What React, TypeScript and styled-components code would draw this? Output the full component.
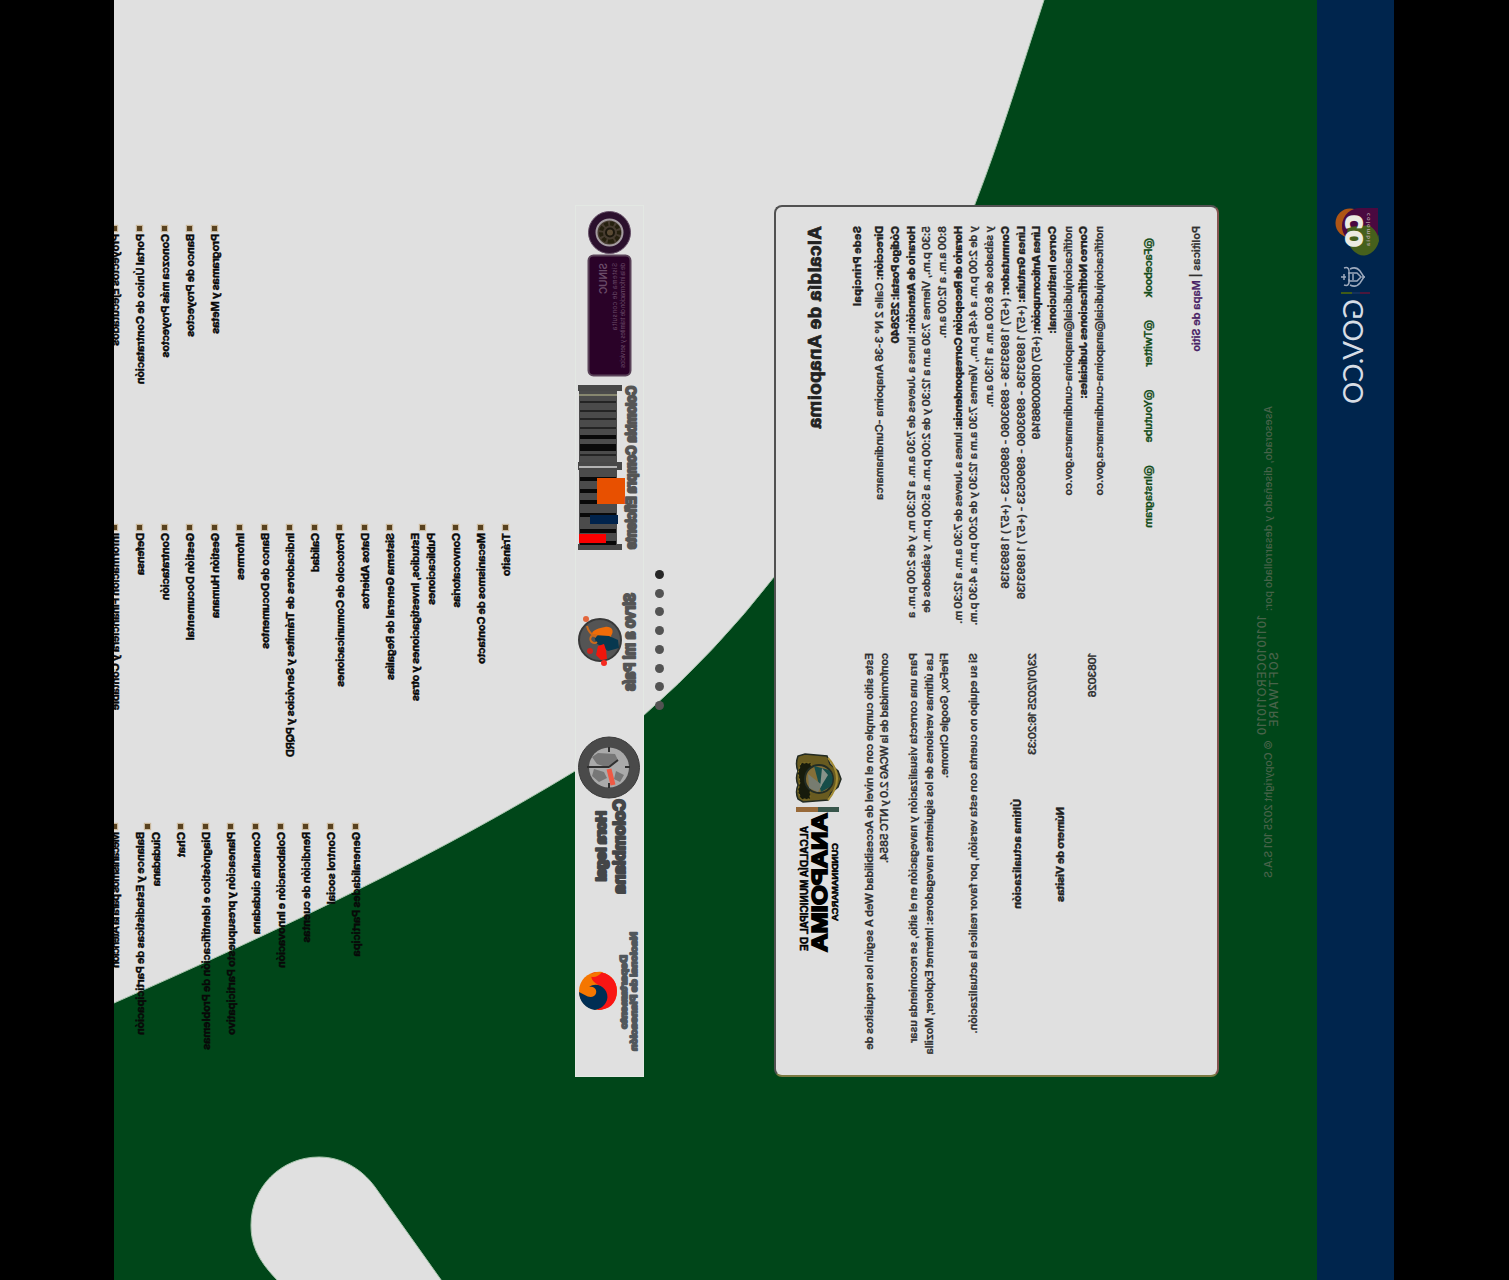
import React, { useCallback } from "react";
import styled, { createGlobalStyle } from "styled-components";

const Global = createGlobalStyle`
  body { margin: 0; background: #000; }
  * { box-sizing: border-box; }
`;

const LIGHT = "#e0e0e0";
const GREEN = "#004619";
const NAVY = "#00254d";

const Viewport = styled.div`
  width: 1509px;
  height: 1280px;
  overflow: hidden;
  background: #000;
`;

/* The whole page is transposed along its diagonal. */
const Page = styled.div`
  width: 1280px;
  height: 1509px;
  padding-top: 114px;
  transform: matrix(0, 1, 1, 0, 0, 0);
  transform-origin: 0 0;
  font-family: Inter, "Liberation Sans", sans-serif;
`;

const Main = styled.main`
  position: relative;
  height: 1203px;
  overflow: hidden;
  background: ${GREEN};
`;

const Backdrop = styled.svg`
  position: absolute;
  inset: 0;
`;

const Flow = styled.div`
  position: relative;
  display: flex;
  flex-direction: column;
  height: 100%;
`;

const Lists = styled.section`
  display: grid;
  grid-template-columns: 299px 299px 400px;
  align-items: start;
  height: 473px;
  margin-top: -12px;
  padding-left: 226px;
`;

const List = styled.ul`
  list-style: none;
  margin: 0;
  padding: 0;
`;

const Item = styled.li`
  display: grid;
  grid-template-columns: 5px 1fr;
  align-items: center;
  column-gap: 3px;
  padding: 4.5px 0;
  font-size: 11px;
  line-height: 16px;
  font-weight: 700;
  color: #080808;
  -webkit-text-stroke: 0.4px #080808;
`;

const Bullet = styled.i`
  width: 5px;
  height: 5px;
  background: #59421f;
  box-shadow: 0 0 1px 1px #c9b79b;
`;

const Line = styled.span`
  display: block;
  width: max-content;
  white-space: pre;
`;

function Fit({ w, children }: { w: number; children: React.ReactNode }) {
  const fit = useCallback(
    (el: HTMLSpanElement | null) => {
      if (!el) return;
      el.style.letterSpacing = "0px";
      const n = (el.textContent || "x").length;
      el.style.letterSpacing = `${(w - el.offsetWidth) / n}px`;
    },
    [w]
  );
  return <Line ref={fit}>{children}</Line>;
}

type Row = [string, number][];
const LISTS: Row[][] = [
  [
    [["Proyectos Ejecutados", 112]],
    [["Portal Único de Contratación", 150]],
    [["Conozca más Proyectos", 123]],
    [["Banco de Proyectos", 103]],
    [["Programas y Metas", 100]],
  ],
  [
    [["Información Financiera y Contable", 177]],
    [["Defensa", 42]],
    [["Contratación", 67]],
    [["Gestión Documental", 107]],
    [["Gestión Humana", 85]],
    [["Informes", 47]],
    [["Banco de Documentos", 116]],
    [["Indicadores de Trámites y Servicios y PQRD", 224]],
    [["Calidad", 39]],
    [["Protocolo de Comunicaciones", 154]],
    [["Datos Abiertos", 76]],
    [["Sistema General de Regalías", 147]],
    [["Estudios, Investigaciones y otras", 168], ["Publicaciones", 72]],
    [["Convocatorias", 74]],
    [["Mecanismos de Contacto", 131]],
    [["Tránsito", 43]],
  ],
  [
    [["Mecanismos para la Atención", 135]],
    [["Balance y Estadísticas de Participación", 203], ["Ciudadana", 54]],
    [["Chat", 25]],
    [["Diagnóstico e Identificación de Problemas", 218]],
    [["Planeación y presupuesto Participativo", 203]],
    [["Consulta ciudadana", 102]],
    [["Colaboración e Innovación", 136]],
    [["Rendición de cuentas", 111]],
    [["Control social", 72]],
    [["Generalidades Participa", 124]],
  ],
];

const Strip = styled.section`
  width: 872px;
  height: 69px;
  margin-left: 205px;
  background: ${LIGHT};
  box-shadow: inset 0 0 0 1px #e3e8e3;
`;

const StripArt = styled.svg`
  display: block;
  font-family: Inter, "Liberation Sans", sans-serif;
`;

const Dots = styled.div`
  display: flex;
  justify-content: center;
  gap: 9.75px;
  height: 9px;
  margin-top: 11px;
`;

const Dot = styled.i<{ $on?: boolean }>`
  width: 9px;
  height: 9px;
  border-radius: 50%;
  background: ${(p) => (p.$on ? "#262626" : "#535353")};
`;

const Card = styled.section`
  display: grid;
  grid-template-columns: 427px 1fr;
  width: 872px;
  height: 446px;
  margin: 110px 0 0 205px;
  padding-left: 19px;
  border: 2px solid #515151;
  border-right-color: #7c7a42;
  border-bottom-color: #855450;
  border-radius: 8px;
  background: ${LIGHT};
  color: #303030;
  font-size: 11px;
  line-height: 15.7px;
  font-weight: 600;
  -webkit-text-stroke: 0.25px;
`;

const Column = styled.div`
  display: flex;
  flex-direction: column;
`;

const Heading = styled.h2`
  margin: 27px 0 23px;
  font-family: "Liberation Sans", sans-serif;
  font-size: 19px;
  line-height: 24px;
  font-weight: 700;
  color: #222;
  -webkit-text-stroke: 0.8px #222;
`;

const Strong = styled.strong`
  font-weight: 800;
  color: #222;
`;

const Place = styled.div`
  margin-bottom: 7px;
`;

const Social = styled.nav`
  display: flex;
  margin-top: 33px;
  padding-left: 12px;
  gap: 23px;
  color: #134b18;
`;

const Policies = styled.div`
  margin-top: 33px;
`;

const Purple = styled.span`
  color: #482064;
`;

const Brand = styled.svg`
  display: block;
  margin: 18px 0 0 100px;
  font-family: "Liberation Sans", sans-serif;
`;

const Block = styled.div<{ $top: number; $left?: number }>`
  margin: ${(p) => p.$top}px 0 0 ${(p) => p.$left || 0}px;
`;

const Credits = styled.footer`
  display: flex;
  align-items: center;
  gap: 4px;
  height: 98px;
  padding-left: 406px;
  color: #48634a;
  font-size: 10.5px;
  font-weight: 500;
`;

const Studio = styled.div`
  width: 121px;
  font-size: 12px;
  line-height: 12px;
  font-weight: 500;
`;

const StudioSub = styled.div`
  padding-left: 37px;
`;

const GovBar = styled.header`
  height: 77px;
  background: ${NAVY};
`;

const GovArt = styled.svg`
  display: block;
  font-family: Lato, sans-serif;
`;

function Bars() {
  const dark = [435, 444, 477, 489, 500, 513, 529, 541];
  return (
    <g>
      <rect x="385" y="4" width="165" height="38" fill="#4b4b4b" />
      <path d="M385 3h6v44h-6zM462 3h8v44h-8zM544 3h6v44h-6z" fill="#484848" />
      {[401, 410, 418, 427, 454].map((x) => (
        <rect key={x} x={x} y="5" width="2" height="36" fill="#242424" />
      ))}
      {dark.map((x) => (
        <rect key={x} x={x} y="5" width={x === 444 ? 7 : 4} height="36" fill="#090909" />
      ))}
      <rect x="394" y="4" width="2" height="38" fill="#87876f" />
      <rect x="466" y="4" width="2" height="38" fill="#b2b2b2" />
      <rect x="478" y="22" width="26" height="28" fill="#e85000" />
      <rect x="515" y="15" width="9" height="28" fill="#00234c" />
      <rect x="534" y="4" width="9" height="27" fill="#fb0000" />
    </g>
  );
}

function Logos() {
  return (
    <StripArt width="872" height="69" viewBox="205 0 872 69">
      <circle cx="232.500" cy="34.500" r="21" fill="#2b102d" stroke="#665068" strokeWidth="1" />
      <circle cx="232.500" cy="34.500" r="13" fill="#473c30" stroke="#a39ba0" strokeWidth="2" />
      <circle cx="232.500" cy="35" r="9" fill="none" stroke="#25200e" strokeWidth="4" strokeDasharray="4 2" />
      <circle cx="232.500" cy="35" r="4" fill="#5a4a33" stroke="#1c180d" strokeWidth="2" />
      <rect x="255.500" y="13.500" width="120" height="42" rx="5" fill="#2a0228" stroke="#5a4359" strokeWidth="2" />
      <g fill="#6a4c69">
        <text x="263" y="32" fontSize="10" fontWeight="600" textLength="31">SINUC</text>
        <text x="263" y="42" fontSize="6" textLength="67">Sistema de consulta</text>
        <text x="263" y="50" fontSize="6" textLength="105">de la información de trámites y servicios</text>
      </g>
      <Bars />
      <g fill="#555" stroke="#555" strokeWidth="2.200" strokeLinejoin="round">
        <text x="386" y="61" fontSize="13" fontWeight="600" textLength="163" lengthAdjust="spacingAndGlyphs">
          Colombia Compra Eficiente
        </text>
        <text x="593" y="60" fontSize="15" fontWeight="600" textLength="98" lengthAdjust="spacingAndGlyphs">
          Sirvo a mi País
        </text>
      </g>
      <circle cx="640" cy="25" r="21" fill="#545454" stroke="#383838" strokeWidth="2" />
      <path d="M627 30c2-10 4-14 9-13l2 12 10 6-3 4-9-3c-6 4-10 0-9-6z" fill="#ef6c08" />
      <path d="M635 19l8 2 8 12-3 11-8-1-4-9z" fill="#07384f" />
      <path d="M636 22a4 4 0 1 1 6 0M626 12c5 1 9 5 11 9" fill="none" stroke="#ce6919" strokeWidth="2" />
      <path d="M646 23l9-2 5 5-1 6-9-1-6-2z" fill="#f2160c" />
      <circle cx="651" cy="15" r="3" fill="#cc241c" />
      <circle cx="619" cy="11" r="3" fill="#e3663c" />
      <circle cx="663" cy="29" r="3" fill="#f52a20" />
      <circle cx="767.500" cy="34" r="30.500" fill="#4a4a4a" stroke="#3b3b3b" strokeWidth="1" />
      <circle cx="767.500" cy="34" r="20" fill="#aaa" />
      <path
        d="M753 23l4-6 7 5 4 12-8 9-6-3zM769 19l7-2 6 7-4 8-6-3zM771 41l8-2 3 6-7 4z"
        fill="#777"
      />
      <path d="M767 34V12M767 34l-7 9M747 34h5M783 34h5M767 50v5" stroke="#303030" strokeWidth="2" />
      <path d="M769 34l16 4" stroke="#ee5944" strokeWidth="5" />
      <g fill="#444648" stroke="#444648" strokeWidth="2.200" strokeLinejoin="round" fontWeight="700">
        <text x="811" y="31" fontSize="13" textLength="70" lengthAdjust="spacingAndGlyphs">
          Hora legal
        </text>
        <text x="799" y="50" fontSize="16" textLength="95" lengthAdjust="spacingAndGlyphs">
          Colombiana
        </text>
      </g>
      <circle cx="991" cy="23" r="19" fill="#f57600" />
      <path d="M972 22a19 19 0 0 0 8 16c10 8 27 2 30-14q-6-6-12-4c-8 12-20 10-26 2z" fill="#f57600" />
      <path d="M973 17c-3 14 5 25 18 25s19-9 19-19l-11-3c-1 9-8 12-12 7-3-6-7-13-14-10z" fill="#f91514" />
      <path d="M1010 20c-1-9-9-16-18-16 2 5 7 10 4 15-4 5-11 1-9-5-7 9 3 21 13 18 6-2 9-7 10-12z" fill="#002e54" />
      <path d="M976 13c-3 4-5 9-4 14 5-4 6-8 4-14z" fill="#f57600" />
      <g fill="#51575c" stroke="#51575c" strokeWidth="1.800" strokeLinejoin="round" fontWeight="600">
        <text x="955" y="52" fontSize="9" textLength="74" lengthAdjust="spacingAndGlyphs">
          Departamento
        </text>
        <text x="932" y="62" fontSize="9" textLength="119" lengthAdjust="spacingAndGlyphs">
          Nacional de Planeación
        </text>
      </g>
    </StripArt>
  );
}

function CityBrand() {
  return (
    <Brand width="202" height="50" viewBox="753 795 202 50">
      <path d="M756 799q8-3 15 0 7-3 14 0 7-3 14 0l3 5-2 25-7 3-6 7-8 3-8-3-7-8-8-3-2-22z" fill="#695b20" stroke="#222a22" strokeWidth="1.500" />
      <path d="M763 802l10-3 9 2 9-2 8 3v9l-36 1z" fill="#171b0c" strokeDasharray="2 2" stroke="#857325" />
      <path d="M758 829q20 18 42 0" fill="none" stroke="#a28b35" strokeWidth="2" />
      <circle cx="779" cy="820" r="14" fill="#856f38" stroke="#232d25" strokeWidth="2" />
      <path d="M766 815l26 7-5 9q-9 6-17-1z" fill="#174d49" />
      <path d="M774 809l14 1 4 9-7 4z" fill="#777c70" />
      <path d="M768 823l20-2-13 8z" fill="#87928a" />
      <rect x="807" y="797" width="5" height="22" fill="#986938" />
      <rect x="807" y="819" width="5" height="21" fill="#38564b" />
      <g fill="#000">
        <text x="826" y="809" fontSize="10" textLength="125" lengthAdjust="spacingAndGlyphs" stroke="#000" strokeWidth=".5">
          ALCALDÍA MUNICIPAL DE
        </text>
        <text x="813" y="828" fontSize="22.500" fontWeight="700" textLength="139" lengthAdjust="spacingAndGlyphs" stroke="#000" strokeWidth="1.800">
          ANAPOIMA
        </text>
        <text x="843" y="838.500" fontSize="9" textLength="78" lengthAdjust="spacingAndGlyphs" stroke="#000" strokeWidth=".5">
          CUNDINAMARCA
        </text>
      </g>
    </Brand>
  );
}

const EMAIL = "notificacionjudicial@anapoima-cundinamarca.gov.co";

export default function App() {
  return (
    <Viewport>
      <Global />
      <Page>
        <Main>
          <Backdrop width="1280" height="1203" viewBox="0 114 1280 1203">
            <path
              d="M-5 100V1046L0 1044C70 1021 140 1000 204 975C350 920 475 858 577 774Q652 716 716 643Q748 610 771 575C855 437 930 280 1003 114L1010 100Z"
              fill={LIGHT}
              stroke="#a9c6ae"
            />
            <path
              d="M1284 444L1187 375C1168 361 1157 341 1157 319C1157 281 1187 251 1225 251C1247 251 1262 259 1284 281Z"
              fill={LIGHT}
              stroke="#a9c6ae"
            />
          </Backdrop>
          <Flow>
            <Lists>
              {LISTS.map((rows, i) => (
                <List key={i}>
                  {rows.map((row) => (
                    <Item key={row[0][0]}>
                      <Bullet />
                      <div>
                        {row.map(([t, w]) => (
                          <Fit key={t} w={w}>{t}</Fit>
                        ))}
                      </div>
                    </Item>
                  ))}
                </List>
              ))}
            </Lists>
            <Strip>
              <Logos />
            </Strip>
            <Dots>
              {[0, 1, 2, 3, 4, 5, 6, 7].map((i) => (
                <Dot key={i} $on={i === 0} />
              ))}
            </Dots>
            <Card>
              <Column>
                <Heading><Fit w={203}>Alcaldía de Anapoima</Fit></Heading>
                <Place><Fit w={80}><Strong>Sede Principal</Strong></Fit></Place>
                <Fit w={274}><Strong>Dirección:</Strong> Calle 2 N° 3-36 Anapoima -Cundinamarca</Fit>
                <Fit w={117}><Strong>Código Postal: 252640</Strong></Fit>
                <Fit w={392}><Strong>Horario de Atención:</Strong> lunes a Jueves de 7:30 a.m. a 12:30 m. y de 2:00 p.m. a</Fit>
                <Fit w={386}>5:30 p.m., Viernes 7:30 a.m a 12:30 y de 2:00 p.m. a 5:00 p.m. y sábados de</Fit>
                <Fit w={112}>8:00 a.m. a 12:00 a.m.</Fit>
                <Fit w={398}><Strong>Horario de Recepción Correspondencia:</Strong> lunes a Jueves de 7:30 a.m. a 12:30 m.</Fit>
                <Fit w={399}>y de 2:00 p.m. a 4:45 p.m., Viernes 7:30 a.m a 12:30 y de 2:00 p.m. a 4:30 p.m.</Fit>
                <Fit w={181}>y sábados de 8:00 a.m. a 11:30 a.m.</Fit>
                <Fit w={362}><Strong>Conmutador:</Strong> (+57) 1 8993136 - 8993060 - 8990533 - (+57 ) 1 8993136</Fit>
                <Fit w={373}><Strong>Línea Gratuita:</Strong> (+57) 1 8993136 - 8993060 - 8990533 - (+57 ) 1 8993136</Fit>
                <Fit w={213}><Strong>Línea Anticorrupción:</Strong> (+57) 018000968149</Fit>
                <Fit w={108}><Strong>Correo Institucional:</Strong></Fit>
                <Fit w={269}>{EMAIL}</Fit>
                <Fit w={173}><Strong>Correo Notificaciones Judiciales:</Strong></Fit>
                <Fit w={269}>{EMAIL}</Fit>
                <Social>
                  <Fit w={59}>@Facebook</Fit>
                  <Fit w={47}>@Twitter</Fit>
                  <Fit w={53}>@Youtube</Fit>
                  <Fit w={62}>@Instagram</Fit>
                </Social>
                <Policies>
                  <Fit w={126}>Políticas | <Purple>Mapa de Sitio</Purple></Fit>
                </Policies>
              </Column>
              <Column>
                <CityBrand />
                <Block $top={18}>
                  <Fit w={397}>Este sitio cumple con el nivel de Accesibilidad Web A según los requisitos de</Fit>
                  <Fit w={210}>conformidad de la WCAG 2.0 y NTC 5854.</Fit>
                </Block>
                <Block $top={13}>
                  <Fit w={390}>Para una correcta visualización y navegación en el sitio, se recomienda usar</Fit>
                  <Fit w={401}>Las últimas versiones de los siguientes navegadores: Internet Explorer, Mozilla</Fit>
                  <Fit w={125}>FireFox, Google Chrome.</Fit>
                </Block>
                <Block $top={13}>
                  <Fit w={381}>Si su equipo no cuenta con esta versión, por favor realice la actualización.</Fit>
                </Block>
                <Block $top={28} $left={146}>
                  <Fit w={110}><Strong>Última actualización</Strong></Fit>
                </Block>
                <Fit w={102}>23/01/2025 16:20:33</Fit>
                <Block $top={12} $left={154}>
                  <Fit w={95}><Strong>Número de Visitas</Strong></Fit>
                </Block>
                <Block $top={16}>
                  <Fit w={44}>1083026</Fit>
                </Block>
              </Column>
            </Card>
            <Credits>
              <Fit w={205}>Asesorado, diseñado y desarrollado por:</Fit>
              <Studio>
                <Fit w={121}>1011010CERO110110</Fit>
                <StudioSub><Fit w={76}>SOFTWARE</Fit></StudioSub>
              </Studio>
              <Fit w={137}>© Copyright 2025 101 S.A.S</Fit>
            </Credits>
          </Flow>
        </Main>
        <GovBar>
          <GovArt width="1280" height="77" viewBox="0 1317 1280 77">
            <circle cx="223" cy="1350" r="14.500" fill="#ae5515" />
            <path d="M208 1378v-17a18 18 0 0 1 36-2v12l-7 7z" fill="#4a0940" />
            <path d="M227 1348a21 16 0 0 1 14 31q-10 0-16-7z" fill="#46601c" />
            <path d="M221 1360q6 16 16 18h-25z" fill="#4a0940" />
            <g fontFamily="Open Sans, sans-serif" fontWeight="800" fill="#ecebe2">
              <text x="214" y="1363" fontSize="31" textLength="34" lengthAdjust="spacingAndGlyphs">
                co
              </text>
              <text x="213" y="1370" fontSize="6" fontWeight="600" textLength="33" fill="#b9a6aa">
                colombia
              </text>
            </g>
            <g fill="none" stroke="#9daabd" strokeWidth="1.500">
              <path d="M268 1344q-2 6 6 5M285 1344q2 6-6 5M274 1344h6M269 1350q-3 6 2 10l6 4 6-4q5-4 2-10" />
              <path d="M273 1349h8v8l-4 4-4-4zM274 1353h6M277 1341v5M277 1362v3" />
            </g>
            <rect x="292" y="1341" width="2" height="11" fill="#405b18" />
            <rect x="292" y="1352" width="2" height="8" fill="#12305c" />
            <rect x="292" y="1360" width="2" height="10" fill="#4b173c" />
            <text x="299" y="1363" fontSize="26" fontWeight="400" textLength="105" lengthAdjust="spacingAndGlyphs" fill="#d7dde5">
              GOV.CO
            </text>
          </GovArt>
        </GovBar>
      </Page>
    </Viewport>
  );
}
